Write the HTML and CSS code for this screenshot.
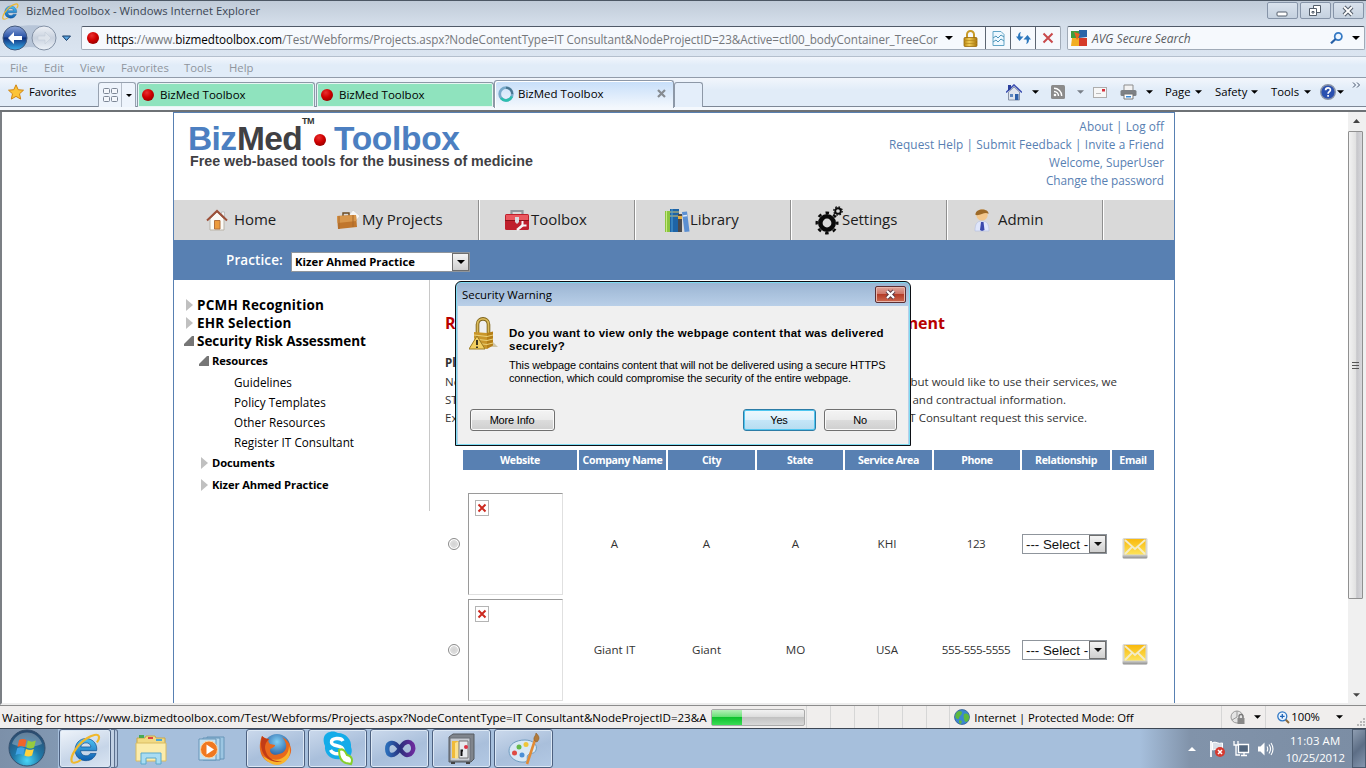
FILE: index.html
```html
<!DOCTYPE html>
<html lang="en">
<head>
<meta charset="utf-8">
<title>BizMed Toolbox - Windows Internet Explorer</title>
<link rel="stylesheet" href="styles.css">
</head>
<body>
<svg class="defs" width="0" height="0">
  <defs>
    <radialGradient id="gRed" cx=".4" cy=".3" r=".8"><stop offset="0" stop-color="#e83030"/><stop offset=".5" stop-color="#d00000"/><stop offset="1" stop-color="#8c0000"/></radialGradient>
    <linearGradient id="gBack" x1="0" y1="0" x2="0" y2="1"><stop offset="0" stop-color="#8fa6d8"/><stop offset=".45" stop-color="#2c55a8"/><stop offset=".5" stop-color="#0f2f7c"/><stop offset="1" stop-color="#38b0ee"/></linearGradient>
    <linearGradient id="gFwd" x1="0" y1="0" x2="0" y2="1"><stop offset="0" stop-color="#eef1f6"/><stop offset=".5" stop-color="#c9d2df"/><stop offset="1" stop-color="#eef3f9"/></linearGradient>
    <linearGradient id="gGold" x1="0" y1="0" x2="1" y2="0"><stop offset="0" stop-color="#b8860f"/><stop offset=".4" stop-color="#f0cc58"/><stop offset="1" stop-color="#a87408"/></linearGradient>
    <linearGradient id="gIE" x1="0" y1="0" x2="0" y2="1"><stop offset="0" stop-color="#4fc3f3"/><stop offset="1" stop-color="#0d5cae"/></linearGradient>
    <radialGradient id="gOrb" cx=".5" cy=".85" r=".85"><stop offset="0" stop-color="#49d6f8"/><stop offset=".45" stop-color="#1f78a8"/><stop offset="1" stop-color="#2c4668"/></radialGradient>
    <radialGradient id="gFox" cx=".5" cy=".3" r=".7"><stop offset="0" stop-color="#7fd0f5"/><stop offset="1" stop-color="#14408c"/></radialGradient>
    <linearGradient id="gVS" x1="0" y1="0" x2="1" y2="0"><stop offset="0" stop-color="#2b6cb8"/><stop offset=".5" stop-color="#2a2f7c"/><stop offset="1" stop-color="#6a2a9c"/></linearGradient>
    <linearGradient id="gMail" x1="0" y1="0" x2="0" y2="1"><stop offset="0" stop-color="#f9b90c"/><stop offset="1" stop-color="#fde35a"/></linearGradient>
    <linearGradient id="gShade" x1="0" y1="0" x2="0" y2="1"><stop offset=".8" stop-color="#d8d8d4"/><stop offset="1" stop-color="#8c8c8c"/></linearGradient>
    <symbol id="caret" viewBox="0 0 8 4"><path d="M0 0h8L4 4z" fill="currentColor"/></symbol>
    <symbol id="dot" viewBox="0 0 12 12"><circle cx="6" cy="6" r="6" fill="url(#gRed)"/></symbol>
    <symbol id="ie" viewBox="0 0 28 28">
      <path d="M24 16H9.500c.3 3 2.200 4.600 4.900 4.600 1.900 0 3.200-.8 4-2.100h5.200C22 22.800 18.600 25 14.300 25 8.600 25 4.600 21 4.600 15.300S8.600 5 14.300 5 24.200 9 24.200 14.500zM18.900 12.600c-.3-2.400-2-3.700-4.400-3.700s-4.300 1.300-4.800 3.700z" fill="url(#gIE)" stroke="#0a4a8e" stroke-width=".6"/>
      <path d="M2 26.500C-1 22 7 10 15 5c5-3.300 10-4.500 11-2.200.7 1.700-.4 4-1.700 5.700" fill="none" stroke="#f0b82c" stroke-width="2"/>
      <path d="M2 26.500c2 1 5.500-.6 8-2.400" fill="none" stroke="#f0b82c" stroke-width="1.600"/>
    </symbol>
    <symbol id="mail" viewBox="0 0 26 22">
      <rect x=".5" y="1" width="25" height="20.500" rx="1.500" fill="url(#gShade)"/>
      <rect x="2.500" y="2" width="21" height="15.500" fill="url(#gMail)"/>
      <path d="M3 3l10 9L23 3M3 17l7-7M23 17l-7-7" fill="none" stroke="#f3ecc8" stroke-width="1.800"/>
    </symbol>
    <symbol id="broken" viewBox="0 0 14 16"><rect x=".5" y=".5" width="13" height="15" fill="#fff" stroke="#b4b4b4"/><path d="M3.500 4.500l7 7M10.500 4.500l-7 7" stroke="#cc2a20" stroke-width="2"/></symbol>
    <symbol id="right" viewBox="0 0 7 12"><path d="M0 0l7 6-7 6z" fill="#c0c0c0"/></symbol>
    <symbol id="down" viewBox="0 0 10 10"><path d="M10 0v10H0V8l8-8z" fill="#767676"/></symbol>
  </defs>
</svg>

<div class="titlebar">
  <svg class="ie-small" width="17" height="17"><use href="#ie"/></svg>
  <span class="title-text">BizMed Toolbox - Windows Internet Explorer</span>
  <div class="win-buttons">
    <span class="win-btn"><svg width="30" height="16"><rect x="10" y="9" width="10" height="4" rx="1" fill="#fff" stroke="#555f6c"/></svg></span>
    <span class="win-btn"><svg width="30" height="16" fill="#fff" stroke="#555f6c"><path d="M13.500 2.500h7v7h-7z"/><path d="M9.500 5.500h7v7h-7zM12 8.500h2v1.500h-2z"/></svg></span>
    <span class="win-btn"><svg width="30" height="16"><path d="M11 4l8 8M19 4l-8 8" stroke="#555f6c" stroke-width="4"/><path d="M11 4l8 8M19 4l-8 8" stroke="#fff" stroke-width="1.800"/></svg></span>
  </div>
</div>

<div class="address-row">
  <svg class="nav-buttons" width="78" height="28" viewBox="0 0 78 28">
    <path d="M15 3C22 1 38 1 44 2a12 12 0 0 1 0 24C36 22 24 22 15 26z" fill="#b7c5d8"/>
    <circle cx="15" cy="14" r="12" fill="url(#gBack)" stroke="#43597d"/>
    <path d="M8 14l6-6v4h8v4h-8v4z" fill="#fff"/>
    <circle cx="44" cy="14" r="12" fill="url(#gFwd)" stroke="#8492a6"/>
    <path d="M51 14l-6-6v4h-7v4h7v4z" fill="#dde3eb" stroke="#c3ccd8" stroke-width=".6"/>
    <path d="M62.500 12h8l-4 4.500z" fill="#5aa5e0" stroke="#153a66"/>
  </svg>
  <div class="address-box">
    <svg class="site-dot" width="12" height="12"><use href="#dot"/></svg>
    <span class="url"><b>https</b>://www.<b>bizmedtoolbox.com</b>/Test/Webforms/Projects.aspx?NodeContentType=IT Consultant&amp;NodeProjectID=23&amp;Active=ctl00_bodyContainer_TreeCor</span>
    <svg class="url-caret" width="8" height="4"><use href="#caret"/></svg>
    <svg class="lock" width="15" height="17" viewBox="0 0 15 17"><path d="M4 8V4.500a3.500 3.500 0 0 1 7 0V8" fill="none" stroke="#c79a28" stroke-width="2"/><rect x="1" y="7.500" width="13" height="9" rx="1" fill="url(#gGold)" stroke="#99690c" stroke-width=".8"/><path d="M1 10.500h13M1 13.500h13" stroke="#b5861d" stroke-width=".7"/></svg>
    <span class="addr-btn"><svg width="13" height="15" viewBox="0 0 13 15"><path d="M1 .5h8l3 3v11H1z" fill="#eef8ff" stroke="#62a5c6"/><path d="M1 7l3-2 2 2 3-3 3 2M1 11l3-2 2 2 3-3 3 2" fill="none" stroke="#4d94b8"/></svg></span>
    <span class="addr-btn"><svg width="15" height="14" viewBox="0 0 15 14"><path d="M5 1C4 2.500 4 4 4.500 5.500H7.500L3.500 10 0 5.500h2C2 3 3 1.500 5 1zM10 13c1-1.500 1-3 .5-4.500H7.500L11.500 4 15 8.500h-2c0 2.500-1 4-3 4.500z" fill="#2b77bd"/></svg></span>
    <span class="addr-btn"><svg width="12" height="12" viewBox="0 0 12 12"><path d="M1.500 1.500l9 9M10.500 1.500l-9 9" stroke="#c9494b" stroke-width="2"/></svg></span>
  </div>
  <div class="search-box">
    <svg width="16" height="16" viewBox="0 0 16 16"><path d="M0 1h8v7H0z" fill="#3f9d3c"/><path d="M8 0h8v7l-8 1z" fill="#2a64a8"/><path d="M1 8h7v8H0z" fill="#f2ae22"/><path d="M8 8h8v8H8z" fill="#d53a28"/><path d="M3 2l6 2-3 6z" fill="#e6621f"/></svg>
    <span class="search-text">AVG Secure Search</span>
    <svg width="13" height="12" viewBox="0 0 13 12"><circle cx="8.300" cy="4.500" r="3.600" fill="#eef6ff" stroke="#3479c4" stroke-width="1.700"/><path d="M5.600 7L1 11.300" stroke="#265fa6" stroke-width="2.200"/></svg>
    <svg class="search-caret" width="8" height="4"><use href="#caret"/></svg>
  </div>
</div>

<div class="menu-row">
  <span class="m1">File</span><span class="m2">Edit</span><span class="m3">View</span><span class="m4">Favorites</span><span class="m5">Tools</span><span class="m6">Help</span>
</div>

<div class="tab-row">
  <div class="favorites">
    <svg width="16" height="16" viewBox="0 0 16 16"><path d="M8 .8l2.200 4.900 5.300.5-4 3.600 1.200 5.300L8 12.400l-4.700 2.700 1.200-5.300-4-3.600 5.300-.5z" fill="#fcc437" stroke="#d08412"/></svg>
    <span>Favorites</span>
  </div>
  <div class="quick-tabs">
    <span class="qt-grid"><svg width="15" height="14" fill="#f4f7fc" stroke="#7d8796"><rect x=".5" y=".5" width="6" height="5" rx="1"/><rect x="8.500" y=".5" width="6" height="5" rx="1"/><rect x=".5" y="8.500" width="6" height="5" rx="1"/><rect x="8.500" y="8.500" width="6" height="5" rx="1"/></svg></span>
    <span class="qt-caret"><svg width="6" height="3"><use href="#caret"/></svg></span>
  </div>
  <div class="tab"><svg width="12" height="12"><use href="#dot"/></svg><span>BizMed Toolbox</span></div>
  <div class="tab"><svg width="12" height="12"><use href="#dot"/></svg><span>BizMed Toolbox</span></div>
  <div class="tab active">
    <svg width="16" height="16" viewBox="0 0 16 16"><circle cx="8" cy="8" r="6.300" fill="none" stroke="#78aacb" stroke-width="2.800"/><path d="M3 12a6.300 6.300 0 0 0 10.800-1.500" fill="none" stroke="#2bbfae" stroke-width="2.600"/><path d="M14.300 8A6.300 6.300 0 0 0 8 1.700" fill="none" stroke="#4a7590" stroke-width="2"/></svg>
    <span>BizMed Toolbox</span>
    <svg class="tab-x" width="9" height="9" viewBox="0 0 9 9"><path d="M1 1l7 7M8 1L1 8" stroke="#868b91" stroke-width="2.200"/></svg>
  </div>
  <div class="tab new"></div>
  <div class="tools">
    <svg class="t-home" width="16" height="17" viewBox="0 0 16 17"><path d="M2.500 8v8h11V8L8 3z" fill="#dfe5ee" stroke="#8a94a8"/><path d="M0 8.500L8 1l8 7.500" fill="none" stroke="#3d4fb0" stroke-width="1.600"/><path d="M2 1h3v4L2 7z" fill="#2b3f9d"/><path d="M9 10h3.500v6H9z" fill="#2c5fa8"/><path d="M4 10h3v3H4z" fill="#5c85bd"/></svg>
    <svg class="t-c1" width="7" height="4"><use href="#caret"/></svg>
    <svg class="t-rss" width="14" height="14" viewBox="0 0 14 14"><rect width="14" height="14" rx="1.500" fill="#8b8b8b"/><circle cx="4" cy="10" r="1.300" fill="#fff"/><path d="M3 6.500A4.500 4.500 0 0 1 7.500 11M3 3.300A7.700 7.700 0 0 1 10.700 11" fill="none" stroke="#fff" stroke-width="1.400"/></svg>
    <svg class="t-c2" width="7" height="4"><use href="#caret"/></svg>
    <svg class="t-mail" width="14" height="11" viewBox="0 0 14 11"><rect x=".5" y=".5" width="13" height="10" fill="#f7f7f7" stroke="#adadad"/><rect x="9" y="2" width="3" height="2.500" fill="#d62f3a"/><path d="M3 6.500h5" stroke="#bbb"/></svg>
    <svg class="t-print" width="17" height="16" viewBox="0 0 17 16"><path d="M4 1h9v6H4z" fill="#f2f2f2" stroke="#8d8d8d"/><rect x=".5" y="6" width="16" height="6" rx="1.500" fill="#7d8084"/><path d="M4 10h9v5H4z" fill="#fff" stroke="#777"/><path d="M6 12h5v1.500H6z" fill="#3a8ad4"/></svg>
    <svg class="t-c3" width="7" height="4"><use href="#caret"/></svg>
    <span class="t-page">Page</span><svg class="t-c4" width="7" height="4"><use href="#caret"/></svg>
    <span class="t-safety">Safety</span><svg class="t-c4" width="7" height="4"><use href="#caret"/></svg>
    <span class="t-tools">Tools</span><svg class="t-c4" width="7" height="4"><use href="#caret"/></svg>
    <svg class="t-help" width="16" height="16" viewBox="0 0 16 16"><circle cx="8" cy="8" r="7.300" fill="#2a50b0" stroke="#8a94a8" stroke-width="1.400"/><path d="M5.600 6.200c.1-3.200 4.900-3 4.800-.2 0 1.700-2.300 1.700-2.300 3.700M8.100 11v1.700" fill="none" stroke="#fff" stroke-width="1.700"/></svg>
    <svg class="t-c5" width="7" height="4"><use href="#caret"/></svg>
    <svg class="t-more" width="9" height="6" viewBox="0 0 9 6"><path d="M1 .5L3.500 3 1 5.500M5 .5L7.500 3 5 5.500" fill="none" stroke="#44536a"/></svg>
  </div>
</div>

<div class="viewport">
  <div class="page">
    <div class="header">
      <div class="brand">
        <div class="logo"><span class="biz">Biz</span><span class="med">Med</span><span class="tm">TM</span><svg width="12" height="12"><use href="#dot"/></svg><span class="toolbox">Toolbox</span></div>
        <div class="tagline">Free web-based tools for the business of medicine</div>
      </div>
      <div class="links">
        <div class="k1">About | Log off</div>
        <div class="k2">Request Help | Submit Feedback | Invite a Friend</div>
        <div class="k3">Welcome, SuperUser</div>
        <div class="k4">Change the password</div>
      </div>
    </div>
    <div class="nav">
      <div class="nav-item n-home"><svg width="22" height="22" viewBox="0 0 22 22"><path d="M4 10v11h14V10l-7-7z" fill="#fbfaf6" stroke="#b9b3a8"/><path d="M15.500 3h3v5l-3-3z" fill="#f4f4f4" stroke="#aaa" stroke-width=".6"/><path d="M1 11.500L11 2l10 9.500" fill="none" stroke="#9c4f38" stroke-width="2"/><path d="M8.500 11.500h5.500V20H8.500z" fill="#ec9a3c" stroke="#b4703a"/></svg><span>Home</span></div>
      <div class="nav-item n-proj"><svg width="24" height="20" viewBox="0 0 24 20"><path d="M13 5l4-5 7 6-5 6z" fill="#f6f6f6" stroke="#c8c8c8" stroke-width=".6"/><path d="M7 6V3h6v3" fill="none" stroke="#6b4a20" stroke-width="1.400"/><path d="M1 6l19-1 1 12-19 2z" fill="#c0762c"/><path d="M1 6l19-1 .5 6L1.500 13z" fill="#d8964a"/><path d="M3 6v13M17 5v12" stroke="#a8682a"/></svg><span>My Projects</span></div>
      <div class="nav-item n-tool"><svg width="24" height="23" viewBox="0 0 24 23"><path d="M6.500 6V2h11v4" fill="none" stroke="#92979d" stroke-width="2.200"/><rect x="0" y="5" width="24" height="16" rx="1.500" fill="#bf1f2c"/><path d="M1 6h22v5H1z" fill="#ea5860"/><path d="M0 11.500h24" stroke="#8b1018"/><path d="M10 8h4v5l-2 2-2-2z" fill="#d8dbe0"/><path d="M12 21l6-5" stroke="#f6f6f6" stroke-width="2.400"/><path d="M17.500 12v4.500h4" fill="none" stroke="#f6f6f6" stroke-width="2"/></svg><span>Toolbox</span></div>
      <div class="nav-item n-lib"><svg width="25" height="25" viewBox="0 0 25 25"><path d="M0 3h6v21H0z" fill="#8ac53e"/><path d="M1.500 3v21" stroke="#c8ea80"/><path d="M5 1h9v23H5z" fill="#1e64a6"/><path d="M5 4h9M5 8h9" stroke="#d9c266"/><path d="M7 1v23" stroke="#4fa0d8"/><path d="M13 6h4v18h-4z" fill="#4b4a4c"/><path d="M13 8h4v3h-4z" fill="#e6ac3a"/><path d="M17 4l5-.5 2.500 20-5 .5z" fill="#5b8fd2"/><path d="M18 8l4-.5" stroke="#dbe7f8" stroke-width="1.500"/></svg><span>Library</span></div>
      <div class="nav-item n-set"><svg width="28" height="29" viewBox="0 0 28 29"><circle cx="12" cy="17" r="6.700" fill="none" stroke="#0a0a0a" stroke-width="4.600"/><circle cx="12" cy="17" r="10.300" fill="none" stroke="#0a0a0a" stroke-width="2.400" stroke-dasharray="3.600 4.490" stroke-dashoffset="1.800"/><circle cx="23" cy="5" r="2.800" fill="none" stroke="#0a0a0a" stroke-width="1.900"/><circle cx="23" cy="5" r="4.200" fill="none" stroke="#0a0a0a" stroke-width="1.300" stroke-dasharray="1.600 1.700"/></svg><span>Settings</span></div>
      <div class="nav-item n-adm"><svg width="16" height="24" viewBox="0 0 16 24"><circle cx="8" cy="7" r="5.700" fill="#f3c78c"/><path d="M1.500 7C1 0 15 0 14.500 6 11 3 7 8 1.500 7z" fill="#9d6a28"/><path d="M1 23c0-7 2-10 7-10s7 3 7 10z" fill="#dfe6fb" stroke="#b3bedf" stroke-width=".6"/><path d="M7 14h2.500l1 8L8 23l-2-1z" fill="#3a48ac"/></svg><span>Admin</span></div>
      <div class="nav-item n-last"></div>
    </div>
    <div class="practice">
      <span class="practice-label">Practice:</span>
      <div class="select practice-select"><span>Kizer Ahmed Practice</span><i><svg width="8" height="4"><use href="#caret"/></svg></i></div>
    </div>
    <div class="content">
      <div class="tree">
        <div class="l1 s1"><svg width="7" height="12"><use href="#right"/></svg><span>PCMH Recognition</span></div>
        <div class="l1 s2"><svg width="7" height="12"><use href="#right"/></svg><span>EHR Selection</span></div>
        <div class="l1 open"><svg width="10" height="10"><use href="#down"/></svg><span>Security Risk Assessment</span></div>
        <div class="l2 res"><svg width="10" height="10"><use href="#down"/></svg><span>Resources</span></div>
        <div class="l3">Guidelines</div>
        <div class="l3">Policy Templates</div>
        <div class="l3">Other Resources</div>
        <div class="l3">Register IT Consultant</div>
        <div class="l2"><svg width="7" height="12"><use href="#right"/></svg><span>Documents</span></div>
        <div class="l2"><svg width="7" height="12"><use href="#right"/></svg><span>Kizer Ahmed Practice</span></div>
      </div>
      <div class="main">
        <div class="line heading"><span>R</span><span>ment</span></div>
        <div class="line lead"><span>Pl</span></div>
        <div class="line p1"><span>No</span><span>but would like to use their services, we</span></div>
        <div class="line p2"><span>ST</span><span>and contractual information.</span></div>
        <div class="line p3"><span>Ex</span><span>IT Consultant request this service.</span></div>
        <div class="thead"><span>Website</span><span>Company Name</span><span>City</span><span>State</span><span>Service Area</span><span>Phone</span><span>Relationship</span><span>Email</span></div>
        <div class="trow">
          <span class="radio"></span><div class="thumb"><svg width="14" height="16"><use href="#broken"/></svg></div>
          <span>A</span><span>A</span><span>A</span><span>KHI</span><span class="phone">123</span>
          <div class="select rel"><span>--- Select -</span><i><svg width="8" height="4"><use href="#caret"/></svg></i></div>
          <svg class="envelope" width="26" height="22"><use href="#mail"/></svg>
        </div>
        <div class="trow">
          <span class="radio"></span><div class="thumb"><svg width="14" height="16"><use href="#broken"/></svg></div>
          <span>Giant IT</span><span>Giant</span><span>MO</span><span>USA</span><span class="phone">555-555-5555</span>
          <div class="select rel"><span>--- Select -</span><i><svg width="8" height="4"><use href="#caret"/></svg></i></div>
          <svg class="envelope" width="26" height="22"><use href="#mail"/></svg>
        </div>
      </div>
    </div>
  </div>
  <div class="scrollbar">
    <svg class="up" width="7" height="4" viewBox="0 0 7 4"><path d="M0 4h7L3.500 0z" fill="#444"/></svg>
    <div class="thumb-bar"><span></span><span></span><span></span></div>
    <svg class="dn" width="7" height="4"><use href="#caret"/></svg>
  </div>
</div>

<div class="status">
  <span class="wait">Waiting for https://www.bizmedtoolbox.com/Test/Webforms/Projects.aspx?NodeContentType=IT Consultant&amp;NodeProjectID=23&amp;A</span>
  <div class="progress"><div></div></div>
  <div class="cells"><i></i><i></i><i></i><i></i><i></i><i></i></div>
  <svg class="globe" width="16" height="16" viewBox="0 0 16 16"><circle cx="8" cy="8" r="7.500" fill="#3b86cf" stroke="#2a5488" stroke-width=".7"/><path d="M3 3c3-2 5-1 5 1S5 7 5 9s-2 1-3 0-1-4 1-6zM10 5c3-1 4 0 5 2s-1 6-3 6-3-6-2-8zM5 11l3 1-1 3-2-1z" fill="#5db83f"/></svg>
  <span class="zone">Internet | Protected Mode: Off</span>
  <div class="status-end">
    <svg class="priv" width="16" height="15" viewBox="0 0 16 15"><circle cx="7" cy="7" r="6" fill="#e4e4e4" stroke="#9a9a9a"/><path d="M7 1v6l-5 3" fill="none" stroke="#999"/><rect x="7.500" y="8" width="7" height="6" fill="#888"/><path d="M9 8V6.500a2 2 0 0 1 4 0V8" fill="none" stroke="#777" stroke-width="1.300"/></svg>
    <svg class="p-caret" width="7" height="4"><use href="#caret"/></svg>
  </div>
  <div class="status-end">
    <svg class="zoom-ic" width="13" height="13" viewBox="0 0 13 13"><path d="M8 8l4 4" stroke="#8c6a3c" stroke-width="2"/><circle cx="5.300" cy="5.300" r="4.500" fill="#eaf4ff" stroke="#2f77c4" stroke-width="1.300"/><path d="M3 5.300h4.600M5.300 3v4.600" stroke="#1e63b6" stroke-width="1.300"/></svg>
    <span class="pct">100%</span>
    <svg class="z-caret" width="7" height="4"><use href="#caret"/></svg>
  </div>
  <svg class="grip" width="9" height="9" fill="#b8b8b8"><path d="M6 0h2v2H6zM3 3h2v2H3zM6 3h2v2H6zM0 6h2v2H0zM3 6h2v2H3zM6 6h2v2H6z"/></svg>
</div>

<div class="taskbar">
  <div class="start"><svg width="38" height="38" viewBox="0 0 38 38"><circle cx="19" cy="19" r="18" fill="url(#gOrb)" stroke="#34506e"/><path d="M4 15a15.500 15.500 0 0 1 30 0c-9 4-21 4-30 0z" fill="#fff" opacity=".28"/><path d="M11 11c3-1.600 5-1.300 7.500 0l-1.500 7c-2.500-1.300-5-1.500-7.500 0z" fill="#f0642c"/><path d="M19.800 11.600c3 1.600 5.500 1.300 8 0l-1.700 7c-2.600 1.300-5 1-7.800-.2z" fill="#96cb3e"/><path d="M9.200 19.300c2.800-1.500 5-1.200 7.500 0L15 26c-2.400-1.300-5-1.200-7.500 0z" fill="#3fa3e6"/><path d="M18 20c3 1.400 5.200 1.300 7.800 0l-1.700 6.600c-2.600 1.400-5 1.300-7.700 0z" fill="#ffd23c"/></svg></div>
  <div class="app ie-app"><svg width="31" height="33" viewBox="0 0 28 28"><use href="#ie"/></svg></div>
  <div class="stack"></div>
  <div class="pin pin-exp"><svg width="32" height="31" viewBox="0 0 32 31"><path d="M2 4h8l1-2h9l1 2h9v22H2z" fill="#f1da84" stroke="#c9a848"/><path d="M4 1h5v3H4z" fill="#48aa54"/><path d="M13 3h5v2h-5z" fill="#d44"/><path d="M21 5h6v2h-6z" fill="#4aa6d6"/><path d="M1 9h30v18H1z" fill="#fbecac" stroke="#d9bc62"/><path d="M6 30V19h20v11h-5v-6H11v6z" fill="#a8dcf2" stroke="#5aa9cc"/></svg></div>
  <div class="pin pin-wmp"><svg width="28" height="27" viewBox="0 0 28 27"><path d="M9 1h17v22H9z" fill="#9cc6e2" stroke="#6795b8"/><path d="M5 2h17v22H5z" fill="#b6d7ec" stroke="#6795b8"/><path d="M1 3h17v21H1z" fill="#c6e2f3" stroke="#6795b8"/><circle cx="11" cy="13.500" r="8.500" fill="#f07820" stroke="#fbd8a8"/><path d="M8.500 8.500v10l7.500-5z" fill="#fff"/></svg></div>
  <div class="running">
    <div class="app"><svg width="34" height="34" viewBox="0 0 34 34"><circle cx="18" cy="15" r="13" fill="url(#gFox)"/><path d="M3 4c2 2 4 3 7 3-1 2-1 3 1 5l5 1c0 3-5 3-5 5 0 4 5 6 9 4 6-1 8-6 7-10-1-3-2-5-4-7 8 4 11 12 8 18-4 8-14 11-21 7C0 26-1 13 3 4z" fill="#e8681c"/><path d="M12 27c9 3 18-3 18-13 3 8-1 18-12 19-5 0-12-4-14-9 2 2 5 3 8 3z" fill="#f9b42d"/><path d="M3 4c-2 8-1 15 3 20 5 6 12 7 17 5-8 1-14-3-16-9-2-5-1-9 3-13-3 0-5-1-7-3z" fill="#c23c16"/></svg></div>
    <div class="app"><svg width="34" height="36" viewBox="0 0 34 36"><path d="M9 1c3-1 6 0 8 1 8 0 14 7 13 14 3 7-3 14-9 12C10 30 3 23 4 15 1 8 3 2 9 1z" fill="#14ace9"/><path d="M22 10c-2-4-12-3-11.500 1.500C11 16 22 13.500 22 19c0 5-10 5-12.500 0" fill="none" stroke="#fff" stroke-width="3.400"/><path d="M18 19c4-2 6 1 8 5 5 1 6 5 4 9l-5-1c-4-1-7-5-7-13z" fill="#fff" stroke="#86cf2c" stroke-width="2"/></svg></div>
    <div class="app"><svg width="32" height="20" viewBox="0 0 32 20"><path d="M16 10C12 4 9 3.500 7 4c-5 1-5 11 0 12 5 .8 8-5 10-8 3-5 8-7 11-3 3 5 0 11-5 11-3 0-5-3-7-6z" fill="none" stroke="url(#gVS)" stroke-width="4.400"/></svg></div>
    <div class="app"><svg width="29" height="32" viewBox="0 0 29 32"><path d="M2 4l4-3h21v25l-3 3H2z" fill="#80858c" stroke="#555a61"/><path d="M3 5h20v23H3z" fill="#c8ccd2" stroke="#686e76"/><path d="M5 8h7v17H5z" fill="#f0bb3a"/><path d="M8 10l4-2v17l-4 1z" fill="#fae190"/><path d="M12 8h9v17h-9z" fill="#e8ebee" stroke="#777"/><circle cx="19" cy="14" r="2" fill="#d34"/><path d="M14.500 17v6M13.500 17.500h2.500" stroke="#111" stroke-width="2"/><path d="M4 29h4v2H4zM19 29h4v2h-4z" fill="#444"/></svg></div>
    <div class="app"><svg width="32" height="34" viewBox="0 0 32 34"><path d="M17 8c8 0 13 5 11 10-1 4-6 3-8 5s1 6-3 7C9 31 1 26 1 19S8 8 17 8z" fill="#d9e9f5" stroke="#6f9cc0"/><circle cx="6.500" cy="21" r="2.500" fill="#df4b43"/><circle cx="11" cy="15" r="2.500" fill="#63b84a"/><circle cx="18" cy="12.500" r="2.500" fill="#f0c63a"/><circle cx="14" cy="23" r="2.500" fill="#4b8fd6"/><path d="M27 8l-8 24" stroke="#e08a35" stroke-width="2.600"/><path d="M27 9c-3-3 1-5 1-8 2 2 5 5 1 9z" fill="#b27a3a" stroke="#8a5c26" stroke-width=".6"/></svg></div>
  </div>
  <div class="tray">
    <svg class="tri" width="8" height="4" viewBox="0 0 8 4"><path d="M0 4h8L4 0z" fill="#fff"/></svg>
    <svg class="flag" width="17" height="18" viewBox="0 0 17 18"><path d="M2 1v16" stroke="#fff" stroke-width="1.800"/><path d="M3.500 2.500c4-1.500 5 2 10 .5v7c-5 1-6-1.500-10 0z" fill="#d9e0e8" stroke="#fff"/><circle cx="11" cy="12" r="5" fill="#d63a30"/><path d="M9 10l4 4M13 10l-4 4" stroke="#fff" stroke-width="1.500"/></svg>
    <svg class="net" width="17" height="17" viewBox="0 0 17 17" fill="none" stroke="#fff" stroke-width="1.300"><path d="M5.500 4.500h10v8h-10z" fill="#52667e"/><path d="M8 15.500h6M11 13v2M1 1v4h4V1M3 5v10h4"/></svg>
    <svg class="spk" width="17" height="16" viewBox="0 0 17 16"><path d="M1 5.500h2.500L7.500 1.500v13l-4-4H1z" fill="#fff"/><path d="M10 5.500q1.500 2.500 0 5M12 3.500q3 4.500 0 9M14 2q4 6 0 12" fill="none" stroke="#fff" stroke-width="1.100"/></svg>
    <div class="clock"><span class="time">11:03 AM</span><span class="date">10/25/2012</span></div>
    <div class="show-desktop"></div>
  </div>
</div>

<div class="dialog">
  <div class="dlg-title"><span>Security Warning</span><b><svg width="29" height="15"><path d="M11 4l7 7M18 4l-7 7" stroke="#5c3a44" stroke-width="4"/><path d="M11 4l7 7M18 4l-7 7" stroke="#fff" stroke-width="2.200"/></svg></b></div>
  <div class="dlg-body">
    <div class="dlg-msg">
      <svg width="29" height="34" viewBox="0 0 29 34"><path d="M17 30h12l-5-5z" fill="#cfc5a6"/><path d="M8.500 16V7.500C8.500 0 19.500 0 19.500 7.500V16" fill="none" stroke="#7d6218" stroke-width="3.600"/><path d="M8.500 16V7.500C8.500 0 19.500 0 19.500 7.500V16" fill="none" stroke="#d9b95a" stroke-width="1.800"/><path d="M5 15l13 1v16L5 30z" fill="#c9962a"/><path d="M18 16l6-1.500v14L18 32z" fill="#b57f18"/><path d="M5 18l13 1.500 6-1.500M5 22l13 1.500 6-1.500M5 26l13 1.500 6-1.500" fill="none" stroke="#ecd27a"/><path d="M8 19l8 13H0z" fill="#f3cf62" stroke="#9b7a22"/><path d="M8 23v5M8 29.500v1.500" stroke="#111" stroke-width="1.600"/></svg>
      <div class="dlg-text">
        <p class="q1">Do you want to view only the webpage content that was delivered</p><p class="q2">securely?</p>
        <p class="d1">This webpage contains content that will not be delivered using a secure HTTPS</p><p class="d2">connection, which could compromise the security of the entire webpage.</p>
      </div>
    </div>
    <div class="dlg-buttons"><span class="btn more">More Info</span><span class="btn yes">Yes</span><span class="btn no">No</span></div>
  </div>
</div>
</body>
</html>
```

FILE: styles.css
```css
* { box-sizing: border-box; }
body { margin: 0; width: 1366px; height: 768px; overflow: hidden; position: relative; display: flex; flex-direction: column; background: #fff; font-family: "Open Sans", "Noto Sans", sans-serif; font-size: 11.5px; line-height: 16px; color: #000; white-space: nowrap; }
svg { display: block; flex: none; }
span { flex: none; }
.defs { position: absolute; }
b { font-weight: normal; }

/* window frame */
.titlebar { height: 24px; display: flex; align-items: flex-start; padding: 2px 2px 0 2px; border-top: 1px solid #4c5764; background: linear-gradient(#c0cbd8, #d4deea); }
.title-text { width: 236px; margin-left: 7px; font-size: 11.3px; color: #3b4654; }
.win-buttons { display: flex; gap: 2px; margin-left: auto; margin-top: -1px; }
.win-btn { width: 31px; height: 17px; border: 1px solid #8694a8; border-radius: 2px; background: linear-gradient(#d9e2ed, #c5d1df); }
.win-btn svg { margin: 0 0 0 -1px; }

.address-row { height: 33px; display: flex; align-items: flex-start; background: linear-gradient(#d4deea, #dbe5f1); border-bottom: 1px solid #b4bfcd; }
.address-box { width: 980px; height: 24px; margin: 2px 0 0 3px; display: flex; align-items: center; background: #f6f9fd; border: 1px solid #a1abb8; border-top-color: #505a68; border-radius: 2px; }
.site-dot { margin-left: 5px; }
.url { width: 833px; margin-left: 7px; padding-top: 1px; color: #74777b; font-size: 11.7px; letter-spacing: -.073px; }
.url b { color: #000; }
.url-caret { margin-left: 6px; }
.lock { margin: 1px 7px 0 10px; }
.addr-btn { width: 25px; height: 22px; border-left: 1px solid #5d6672; display: flex; align-items: center; justify-content: center; }
.search-box { width: 298px; height: 24px; margin: 2px 0 0 6px; padding-left: 3px; display: flex; align-items: center; background: #f6f9fd; border: 1px solid #a1abb8; border-top-color: #505a68; border-radius: 2px; }
.search-text { width: 238px; margin-left: 5px; padding-top: 1px; font-style: italic; color: #5a5d62; font-size: 12px; }
.search-caret { margin-left: 9px; }

.menu-row { height: 21px; display: flex; align-items: center; padding: 2px 0 0 10px; background: linear-gradient(#f2f6fc, #e1ecf8 40%, #e1ecf8); border-bottom: 1px solid #929caa; color: #8f959d; font-size: 11.3px; }
.m1 { width: 34px; } .m2 { width: 36px; } .m3 { width: 41px; } .m4 { width: 63px; } .m5 { width: 45px; }

.tab-row { height: 34px; display: flex; align-items: flex-start; background: linear-gradient(#f2f6fc, #e1ecf8 12px, #e1ecf8 28px, #7d8796 28px, #7d8796 29px, #f4f8fd 29px, #f4f8fd 32px, #6e7276 32px); }
.favorites { width: 98px; display: flex; align-items: center; padding: 6px 0 0 8px; gap: 5px; font-size: 11.2px; }
.quick-tabs { width: 38px; height: 25px; margin-top: 4px; display: flex; border: 1px solid #98a2b0; border-bottom: 0; border-radius: 3px 3px 0 0; background: #eef4fc; }
.qt-grid { width: 23px; display: flex; align-items: center; justify-content: center; border-right: 1px solid #b4bcc8; }
.qt-caret { flex: 1; display: flex; align-items: center; justify-content: center; }
.tab { width: 178px; height: 25px; margin: 4px 0 0 1px; display: flex; align-items: center; gap: 6px; padding-left: 4px; border: 1px solid #8d98a7; border-bottom: 0; border-radius: 3px 3px 0 0; background: #8fe3be; box-shadow: inset 0 0 0 1px #e6f6f2; }
.tab.active { width: 180px; height: 28px; margin: 2px 0 0 0; padding: 0 7px 2px 3px; gap: 4px; background: linear-gradient(#c6def9, #f4f8fd); box-shadow: inset 1px 1px #fff; }
.tab-x { margin-left: auto; }
.tab.new { width: 29px; height: 25px; margin-left: 0; background: #e4eefa; box-shadow: none; }
.tools { display: flex; align-items: center; height: 28px; margin-left: 303px; }
.t-c1 { margin-left: 10px; } .t-rss { margin-left: 12px; } .t-c2 { margin-left: 12px; color: #787f88; } .t-mail { margin-left: 9px; } .t-print { margin-left: 13px; } .t-c3 { margin-left: 9px; }
.t-page { width: 27px; margin-left: 12px; } .t-safety { width: 33px; margin-left: 13px; } .t-tools { width: 30px; margin-left: 13px; } .t-c4 { margin-left: 3px; }
.t-page, .t-safety, .t-tools { font-size: 11.3px; }
.t-help { margin-left: 9px; } .t-c5 { margin-left: 1px; } .t-more { margin: -15px 0 0 8px; }

/* viewport */
.viewport { height: 593px; display: flex; border-left: 2px solid #7b7f84; background: #fff; border-bottom: 2px solid #ededed; overflow: hidden; }
.page { width: 1002px; height: 593px; margin-left: 171px; border: 1px solid #5880b2; border-bottom: 0; }
.header { height: 87px; display: flex; justify-content: space-between; padding: 0 10px 0 14px; }
.logo { display: flex; align-items: center; height: 50px; font-family: "Liberation Sans", Arial, sans-serif; font-weight: bold; font-size: 33.5px; line-height: 36px; letter-spacing: -.6px; }
.biz, .toolbox { color: #4c7fc1; } .med { color: #404043; }
.biz { width: 49px; } .med { width: 65px; } .tm { width: 12px; height: 44px; font-size: 9px; line-height: 10px; letter-spacing: -.4px; font-weight: bold; color: #333; }
.toolbox { letter-spacing: -.3px; }
.biz, .med, .toolbox { margin-top: 1px; }
.logo svg { margin-top: 4px; margin-right: 8px; }
.tagline { margin: -11px 0 0 2px; font: bold 14.25px/18px "Liberation Sans", Arial, sans-serif; color: #404043; }
.links { padding-top: 5px; text-align: right; line-height: 18px; font-size: 11.8px; color: #5880b2; }
.links div { height: 18px; line-height: 17px; }
.k2 { letter-spacing: .09px; }
.k1 { letter-spacing: .07px; }
.k4 { letter-spacing: -.05px; }
.nav { height: 40px; display: flex; background: #d9d9d9; font-size: 15px; letter-spacing: -.04px; color: #1c1c1c; }
.nav-item { width: 156px; display: flex; align-items: center; border-right: 1px solid #8f8f8f; box-shadow: inset 1px 0 #fff; }
.nav-item span { margin-top: -2px; }
.nav-item.n-home { width: 140px; padding-left: 32px; gap: 6px; border: 0; box-shadow: none; }
.nav-item.n-proj { width: 165px; padding-left: 22px; gap: 2px; box-shadow: none; }
.n-tool { padding-left: 26px; gap: 2px; } .n-lib { padding-left: 30px; } .n-set { padding-left: 24px; } .n-set span { margin-left: -1px; } .n-adm { padding-left: 27px; gap: 8px; }
.n-last { flex: 1; border: 0; }
.practice { height: 40px; display: flex; align-items: center; background: #5880b2; padding-left: 52px; }
.practice-label { width: 65px; color: #fff; font-weight: 600; font-size: 13.5px; letter-spacing: .1px; }
.select { display: flex; align-items: center; background: #fff; border: 1px solid #8f959c; }
.select i { width: 17px; height: 18px; margin-left: auto; display: flex; align-items: center; justify-content: center; border: 1px solid #6e6e6e; background: linear-gradient(#f4f4f4, #cfcfcf); }
.practice-select { width: 179px; height: 20px; margin-top: 3px; padding-left: 3px; font-weight: bold; font-size: 11.3px; }
.content { display: flex; }
.tree { width: 256px; height: 231px; padding-top: 16px; border-right: 1px solid #c8c8c8; }
.l1 { height: 18px; display: flex; align-items: center; padding-left: 12px; gap: 4px; font-weight: bold; font-size: 13.5px; }
.l1.s1 { letter-spacing: .22px; }
.l1.s2 { letter-spacing: .2px; }
.l1.open { padding-left: 10px; gap: 3px; letter-spacing: -.06px; }
.l2 { height: 22px; display: flex; align-items: center; padding-left: 27px; gap: 4px; font-weight: bold; font-size: 11.2px; letter-spacing: -.12px; }
.l2.res { padding-left: 25px; gap: 3px; height: 22px; }
.l3 { height: 20px; line-height: 20px; padding-left: 60px; font-size: 11.7px; letter-spacing: .04px; }
.main { padding-left: 15px; padding-top: 30px; color: #333; }
.line { display: flex; justify-content: space-between; height: 18px; line-height: 18px; font-size: 11.5px; }
.heading { width: 500px; height: 26px; line-height: 26px; font-weight: bold; font-size: 16px; color: #b80000; }
.lead { font-weight: bold; margin-top: 18px; height: 19px; } .p1 { width: 672px; } .p2 { width: 621px; } .p3 { width: 642px; }
.thead { display: grid; grid-template-columns: 114px 87px 87px 86px 87px 86px 88px 42px; gap: 2px; margin: 23px 0 21px 18px; color: #fff; font-weight: bold; font-size: 10.6px; letter-spacing: -.37px; line-height: 20px; text-align: center; }
.thead span { background: #5880b2; }
.trow { display: grid; grid-template-columns: 18px 108px 87px 97px 81px 102px 76px 8px 85px 15px 26px; height: 106px; align-items: center; text-align: center; font-size: 11.6px; }
.trow > span:not(.radio) { margin-top: -1px; }
.phone { letter-spacing: -.45px; }
.radio { width: 12px; height: 12px; margin-left: 3px; border: 1px solid #8b8b8b; border-radius: 50%; background: radial-gradient(#d2d2d2, #dedede 50%, #fff 60%, #e5e5e5); }
.thumb { width: 95px; height: 102px; margin-left: 5px; padding: 6px; border: 1px solid #e0e0e0; border-top-color: #9a9a9a; border-left-color: #9a9a9a; }
.rel { grid-column: 9; height: 20px; padding-left: 3px; font-family: "Liberation Sans", Arial, sans-serif; font-size: 13.3px; color: #111; }
.rel span { margin-top: 1px; }
.envelope { grid-column: 11; margin-top: 7px; }
.scrollbar { width: 18px; margin-left: 173px; display: flex; flex-direction: column; align-items: center; background: #f0f0f0; padding: 7px 3px 0 0; }
.thumb-bar { width: 15px; height: 468px; margin-top: 8px; display: flex; flex-direction: column; align-items: center; justify-content: center; gap: 2px; border: 1px solid #909090; border-radius: 1px; background: linear-gradient(90deg, #f2f2f2, #e2e2e2 50%, #c6c6ca 60%, #d8d8dc); }
.thumb-bar span { width: 7px; height: 1px; background: #555; }
.up, .dn { margin-left: 1px; }
.dn { margin-top: 94px; color: #444; }

/* status bar */
.status { height: 23px; display: flex; align-items: center; background: #f0eeed; border-top: 1px solid #8c8c8c; font-size: 11.3px; }
.wait { width: 705px; margin-left: 2px; padding-top: 1px; font-size: 11.6px; letter-spacing: -.015px; }
.progress { width: 94px; height: 17px; margin-left: 4px; border: 1px solid #aaa; border-radius: 2px; background: linear-gradient(#f2f2f2, #ddd 45%, #c2c2c2 50%, #d8d8d8); }
.progress div { width: 30px; height: 15px; background: linear-gradient(#b5f0b8, #6be078 45%, #0fc12e 50%, #3bdc55); }
.cells { display: flex; width: 149px; height: 22px; margin-left: 1px; }
.cells i { width: 24px; border-left: 1px solid #d6d6d6; }
.cells i:last-child { border-right: 1px solid #d6d6d6; }
.zone { width: 160px; margin-left: 4px; padding-top: 1px; letter-spacing: -.07px; }
.status-end { height: 22px; display: flex; align-items: center; border-left: 1px solid #d6d6d6; width: 44px; padding-left: 8px; }
.zone + .status-end { margin-left: 87px; }
.status-end + .status-end { width: 92px; padding-left: 11px; }
.p-caret { margin-left: 8px; } .pct { width: 30px; margin-left: 1px; } .z-caret { margin-left: 15px; } .grip { margin: 10px 0 0 0; }

/* taskbar */
.taskbar { height: 40px; display: flex; align-items: flex-start; background: #a6bfdc; border-top: 1px solid #3c4654; }
.start { flex: none; width: 58px; height: 39px; padding: 0 0 0 8px; background: linear-gradient(90deg, #7c90a9, #8298b2); }
.app { flex: none; width: 59px; height: 39px; display: flex; align-items: center; justify-content: center; border: 1px solid #4d6180; border-radius: 3px; background: linear-gradient(160deg, #cbd9ec, #a9bfdb 55%, #b3c9e4); box-shadow: inset 0 0 0 1px #dce8f5; }
.ie-app { width: 52px; margin: 0 0 0 1px; background: linear-gradient(160deg, #eff4fa, #c6d5e8 60%, #dae5f2); }
.stack { flex: none; width: 7px; height: 39px; border: 1px solid #5c708e; border-left: 0; border-radius: 0 3px 3px 0; background: linear-gradient(90deg, #c2d1e4 3px, #5c708e 3px, #5c708e 4px, #b4c6de 4px); }
.pin { flex: none; display: flex; align-items: center; height: 40px; }
.pin-exp { margin-left: 17px; } .pin-wmp { margin-left: 31px; }
.running { flex: none; display: flex; gap: 3px; margin-left: 20px; }
.tray { flex: none; width: 296px; height: 39px; margin-left: auto; display: flex; align-items: center; background: linear-gradient(90deg, #a6bfdc 70px, #8193aa 120px, #7b8da4); color: #fff; }
.tri { margin-left: 118px; } .flag { margin-left: 13px; } .net { margin-left: 7px; } .spk { margin-left: 7px; }
.clock { width: 76px; margin-left: 4px; display: flex; flex-direction: column; align-items: center; font-size: 11.4px; line-height: 17px; padding-top: 1px; }
.time { letter-spacing: .1px; } .date { letter-spacing: -.1px; }
.show-desktop { width: 14px; height: 39px; margin-left: auto; border: 1px solid #4b5b70; background: linear-gradient(135deg, #8e9db1, #5d6e86 50%, #8496ae); }

/* modal */
.dialog { position: absolute; left: 455px; top: 281px; width: 456px; height: 165px; border: 1px solid #0c0f14; border-radius: 6px 6px 0 0; background: linear-gradient(#9ab4d2, #b9cfe8 24px); box-shadow: inset 0 0 0 1px #7fdcf2; padding: 1px 2px 2px 2px; }
.dlg-title { height: 23px; display: flex; align-items: center; padding-left: 4px; }
.dlg-title span { width: 412px; font-size: 11.4px; }
.dlg-title b { width: 31px; height: 17px; margin: 0 0 0 1px; border: 1px solid #5b2f34; border-radius: 2px; background: linear-gradient(#dda59b, #cf7668 45%, #b43c28 50%, #cd6a50); box-shadow: inset 0 0 0 1px #e9b7ac; }
.dlg-body { height: 138px; background: #f0f0f0; font-family: "Liberation Sans", Arial, sans-serif; font-size: 11px; }
.dlg-msg { height: 102px; display: flex; padding: 11px 0 0 11px; gap: 11px; }
.dlg-text p { margin: 0; line-height: 13px; }
.dlg-text { padding-top: 10px; }
.q1, .q2 { font-weight: bold; font-size: 11.5px; letter-spacing: .27px; }
.d1, .d2 { letter-spacing: -.13px; }
.dlg-text .q2 { margin-bottom: 6px; }
.dlg-buttons { display: flex; padding-left: 12px; margin-top: 1px; }
.btn { width: 85px; height: 22px; line-height: 20px; padding-right: 1px; text-align: center; letter-spacing: -.2px; border: 1px solid #707070; border-radius: 3px; background: linear-gradient(#f4f4f4, #ebebeb 48%, #dcdcdc 50%, #cfcfcf); box-shadow: inset 0 0 0 1px #fafafa; }
.yes { width: 73px; margin: 0 8px 0 188px; border-color: #2c7ca6; background: linear-gradient(#eef8fd, #dff1fb 48%, #c4e6f8 50%, #b5dcf0); box-shadow: inset 0 0 0 1px #4fc6f0; }
.no { width: 73px; }
```
